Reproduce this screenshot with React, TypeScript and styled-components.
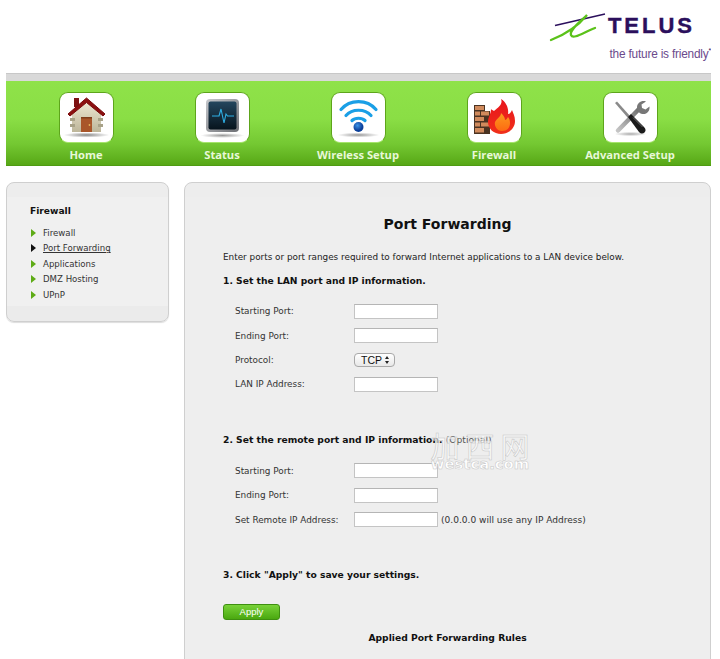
import * as React from 'react';
import styled, { createGlobalStyle } from 'styled-components';

const GlobalStyle = createGlobalStyle`
  html, body {
    margin: 0;
    padding: 0;
    background: #ffffff;
    font-family: "DejaVu Sans", Verdana, sans-serif;
  }
`;

const Page = styled.div`
  width: 705px;
  height: 659px;
  margin-left: 6px;
  overflow: hidden;
`;

const Header = styled.div`
  height: 73px;
  display: flex;
  flex-direction: column;
  align-items: flex-end;
`;

const LogoRow = styled.div`
  display: flex;
  align-items: flex-start;
  margin-top: 10px;
  margin-right: 16px;
`;

const LogoWord = styled.span`
  font-family: "Liberation Sans", Arial, sans-serif;
  font-weight: bold;
  font-size: 22px;
  line-height: 24px;
  letter-spacing: 3px;
  color: #2b0f5c;
  -webkit-text-stroke: 0.4px #2b0f5c;
  margin-top: 4px;
`;

const Tagline = styled.div`
  font-family: "Liberation Sans", Arial, sans-serif;
  font-size: 11.85px;
  line-height: 14px;
  letter-spacing: -0.2px;
  color: #6b4a8c;
  margin-top: 3px;
  sup {
    font-size: 7px;
    line-height: 0;
    color: #2b0f5c;
  }
`;

const TopStripe = styled.div`
  height: 7px;
  background: #d9d9d9;
  border-top: 1px solid #c8c8c8;
`;

const NavBar = styled.nav`
  height: 85px;
  padding-left: 12px;
  display: flex;
  background: linear-gradient(#8fe249 0%, #8ade45 45%, #74c832 75%, #57a716 100%);
  border-bottom: 1px solid #4f9b12;
  box-sizing: border-box;
`;

const NavItem = styled.a`
  width: 136px;
  display: flex;
  flex-direction: column;
  align-items: center;
  padding-top: 11px;
`;

const Tile = styled.div`
  width: 55px;
  height: 51px;
  box-sizing: border-box;
  background: #ffffff;
  border: 1px solid #5da51b;
  border-bottom-color: #a6e46c;
  border-radius: 9px;
  display: flex;
  align-items: center;
  justify-content: center;
`;

const NavLabel = styled.span`
  font-family: "Open Sans", "DejaVu Sans", sans-serif;
  font-size: 11.2px;
  line-height: 14px;
  font-weight: 700;
  color: #e8f8d8;
  margin-top: 5px;
  white-space: nowrap;
`;

const Columns = styled.div`
  display: flex;
  align-items: flex-start;
  gap: 15px;
  margin-top: 16px;
`;

const Panel = styled.div`
  box-sizing: border-box;
  background: #eeeeee;
  border: 1px solid #cfcfcf;
  border-radius: 8px;
`;

const Sidebar = styled(Panel)`
  width: 163px;
  height: 140px;
  flex: none;
  padding: 22px 0 0 23px;
  background: linear-gradient(#ededed 0, #ededed 14px, #f0f0f0 14px, #f0f0f0 123px, #ebebeb 123px);
  box-shadow: 0 1px 1px #dddddd;
`;

const SideTitle = styled.div`
  font-size: 9.1px;
  line-height: 12px;
  font-weight: bold;
  color: #111111;
  margin-bottom: 8px;
`;

const SideLink = styled.div<{ $active?: boolean }>`
  display: flex;
  align-items: center;
  height: 15.5px;
  font-size: 8.6px;
  color: #333333;
  text-decoration: ${p => (p.$active ? 'underline' : 'none')};
`;

const Arrow = styled.span<{ $active?: boolean }>`
  width: 0;
  height: 0;
  margin-left: 1px;
  margin-right: 7px;
  border-left: 5px solid ${p => (p.$active ? '#111111' : '#5eab16')};
  border-top: 4px solid transparent;
  border-bottom: 4px solid transparent;
`;

const Main = styled(Panel)`
  position: relative;
  width: 527px;
  height: 500px;
  flex: none;
  padding: 31px 0 0 38px;
  background: linear-gradient(#ededed 0, #ededed 14px, #eeeeee 14px);
`;

const PageTitle = styled.h1`
  margin: 0 38px 16px 0;
  font-size: 14px;
  line-height: 20px;
  font-weight: bold;
  color: #111111;
  text-align: center;
`;

const Intro = styled.p`
  margin: 0 0 10px;
  font-size: 8.86px;
  line-height: 14px;
  color: #222222;
  white-space: nowrap;
`;

const StepTitle = styled.h2<{ $gap?: number; $after?: number }>`
  margin: ${p => p.$gap ?? 0}px 0 ${p => p.$after ?? 10}px;
  font-size: 9.2px;
  line-height: 14px;
  font-weight: bold;
  color: #111111;
  white-space: nowrap;
`;

const Optional = styled.span`
  font-weight: normal;
  font-size: 9.2px;
  color: #555555;
`;

const FieldRow = styled.div`
  display: flex;
  align-items: center;
  height: 24.4px;
  padding-left: 12px;
`;

const FieldLabel = styled.label`
  width: 119px;
  flex: none;
  font-size: 8.9px;
  color: #333333;
`;

const TextInput = styled.div`
  width: 84px;
  height: 15px;
  box-sizing: border-box;
  background: #ffffff;
  border: 1px solid #c4c4c4;
  border-top-color: #b5b5b5;
`;

const SelectBox = styled.div`
  width: 41px;
  height: 14px;
  box-sizing: border-box;
  padding: 0 5px 0 6px;
  display: flex;
  align-items: center;
  justify-content: space-between;
  background: linear-gradient(#ffffff, #e8e8e8);
  border: 1px solid #a8a8a8;
  border-radius: 4px;
  font-family: "Liberation Sans", Arial, sans-serif;
  font-size: 10.5px;
  color: #111111;
`;

const Hint = styled.span`
  margin-left: 3px;
  font-size: 9.05px;
  color: #333333;
`;

const ApplyButton = styled.div`
  width: 57px;
  height: 16px;
  box-sizing: border-box;
  margin-top: 22px;
  background: linear-gradient(#78d238, #4aa810);
  border: 1px solid #3e8f10;
  border-radius: 3px;
  color: #ffffff;
  font-family: "Liberation Sans", Arial, sans-serif;
  font-size: 9.5px;
  line-height: 14px;
  text-align: center;
`;

const RulesTitle = styled.h3`
  margin: 11px 38px 0 0;
  font-size: 9.2px;
  line-height: 14px;
  font-weight: bold;
  color: #111111;
  text-align: center;
`;

const Watermark = styled.div`
  position: absolute;
  left: 243px;
  top: 250px;
  width: 104px;
  color: rgba(255, 255, 255, 0.65);
  -webkit-text-stroke: 0.5px #c4c4c4;
  text-align: center;
  font-family: "Noto Sans CJK SC", sans-serif;
  pointer-events: none;
`;

const WatermarkCn = styled.div`
  font-size: 29px;
  line-height: 25px;
  letter-spacing: 6px;
  margin-right: -6px;
  white-space: nowrap;
`;

const WatermarkEn = styled.div`
  font-family: "DejaVu Sans", sans-serif;
  font-size: 14.8px;
  line-height: 12px;
  font-weight: bold;
  color: #ffffff;
`;

const HomeIcon = () => (
  <svg width="53" height="49" viewBox="0 0 53 49">
    <defs>
      <linearGradient id="wall" x1="0" y1="0" x2="0" y2="1">
        <stop offset="0" stopColor="#efe9d4" />
        <stop offset="1" stopColor="#bdb69a" />
      </linearGradient>
      <radialGradient id="shadow">
        <stop offset="0" stopColor="#888888" />
        <stop offset="1" stopColor="#ffffff" />
      </radialGradient>
    </defs>
    <ellipse cx="26.5" cy="42" rx="23" ry="2.6" fill="url(#shadow)" />
    <path d="M14 5h5v9h-5z" fill="#7d1212" />
    <path d="M12 20 26.500 8 41 20v19H12z" fill="url(#wall)" />
    <path d="M8 21 26.500 5 45 21l-2 2L26.500 9.500 10 23z" fill="#8c1010" stroke="#7a0c0c" strokeWidth="1" strokeLinejoin="round" />
    <path d="M10 25h5v3h-5zM10 31h5v3h-5zM38 25h5v3h-5zM38 31h5v3h-5z" fill="#a8a288" />
    <path d="M21 24h11v15H21z" fill="#a9562a" />
    <path d="M21 24h11v1.500H21z" fill="#7e3d1b" />
    <circle cx="29.500" cy="32" r="0.9" fill="#e5b45e" />
  </svg>
);

const StatusIcon = () => (
  <svg width="53" height="49" viewBox="0 0 53 49">
    <defs>
      <linearGradient id="screen" x1="0" y1="0" x2="0" y2="1">
        <stop offset="0" stopColor="#24465e" />
        <stop offset="1" stopColor="#07141d" />
      </linearGradient>
      <linearGradient id="bezel" x1="0" y1="0" x2="1" y2="1">
        <stop offset="0" stopColor="#c6c8cc" />
        <stop offset="1" stopColor="#6d6f74" />
      </linearGradient>
      <radialGradient id="shadow2">
        <stop offset="0" stopColor="#999999" />
        <stop offset="1" stopColor="#ffffff" />
      </radialGradient>
    </defs>
    <ellipse cx="26.500" cy="42.500" rx="22" ry="2.400" fill="url(#shadow2)" />
    <rect x="10" y="6" width="33" height="33" rx="4" fill="url(#bezel)" />
    <rect x="12.500" y="8.500" width="28" height="28" rx="2" fill="url(#screen)" />
    <path d="M16 23h7l2-7 3 14 2-9 1.500 2H38" fill="none" stroke="#2fb0e6" strokeWidth="1.100" />
  </svg>
);

const WifiIcon = () => (
  <svg width="53" height="49" viewBox="0 0 53 49">
    <defs>
      <radialGradient id="dot" cx="0.400" cy="0.350">
        <stop offset="0" stopColor="#3c94e8" />
        <stop offset="1" stopColor="#0b3f9a" />
      </radialGradient>
      <radialGradient id="shadow3">
        <stop offset="0" stopColor="#999999" />
        <stop offset="1" stopColor="#ffffff" />
      </radialGradient>
    </defs>
    <ellipse cx="26.500" cy="42" rx="21" ry="2.400" fill="url(#shadow3)" />
    <g fill="none" stroke="#1a9fe6" strokeWidth="3.200" strokeLinecap="round">
      <path d="M9 16.500C18 6 35 6 44 16.500" />
      <path d="M14 22.500C20 15.500 33 15.500 39 22.500" />
      <path d="M20 27.500C23 24.500 30 24.500 33 27.500" />
    </g>
    <circle cx="26.500" cy="34" r="5" fill="url(#dot)" />
  </svg>
);

const FirewallIcon = () => (
  <svg width="53" height="49" viewBox="0 0 53 49">
    <defs>
      <linearGradient id="flame" x1="0" y1="0" x2="0" y2="1">
        <stop offset="0" stopColor="#e8141c" />
        <stop offset="1" stopColor="#f0301a" />
      </linearGradient>
      <linearGradient id="core" x1="0" y1="0" x2="0" y2="1">
        <stop offset="0" stopColor="#fb9a1e" />
        <stop offset="1" stopColor="#fd6a12" />
      </linearGradient>
    </defs>
    <path d="M6 12h11v6h5v23H6z" fill="#4a3322" />
    <path d="M7 13h9v4H7zM7 18.500h5v4H7zM13 18.500h8v4h-8zM7 24h9v4H7zM7 29.500h5v4H7zM13 29.500h8v4h-8zM7 35h9v4.500H7z" fill="#d08a5c" />
    <path d="M33 6c2 5-2 8-7 12-2-1-3-2-3-2 0 5-3 8-3 13 0 7 6 12 13 12s14-5 14-13c0-5-2-8-3-11-1 2-2 4-4 4 1-6-2-12-7-15z" fill="url(#flame)" />
    <path d="M33 20c0 4-4 5-6 9-1 4 2 9 7 9s8-3 8-8c0-3-1-5-2-6-1 2-2 3-3 3 0-3-2-5-4-7z" fill="url(#core)" />
  </svg>
);

const ToolsIcon = () => (
  <svg width="53" height="49" viewBox="0 0 53 49">
    <defs>
      <radialGradient id="shadow5">
        <stop offset="0" stopColor="#aaaaaa" />
        <stop offset="1" stopColor="#ffffff" />
      </radialGradient>
      <linearGradient id="steel" x1="0" y1="1" x2="1" y2="0">
        <stop offset="0" stopColor="#c4c4c4" />
        <stop offset="1" stopColor="#6e6e6e" />
      </linearGradient>
    </defs>
    <ellipse cx="26.500" cy="41" rx="16" ry="2.200" fill="url(#shadow5)" />
    <path d="M14 37.500 35 16" stroke="url(#steel)" strokeWidth="4.500" strokeLinecap="round" />
    <path d="M42 8.500c-4-1.500-9 1-9 6 0 3 2 6 5.500 6.500 4.500.5 7.500-3 7-7.500l-4 3-3.500-1.500-.5-3.500z" fill="#777777" />
    <path d="M11 10l2-1.500L26 23l-2 2z" fill="#8a8a8a" />
    <path d="M24 24 27 21l13 13c2 2 2 4 .5 5.500S37 41 35 39z" fill="#1b1b1b" />
    <path d="M29 24.500l9.500 9.500" stroke="#6a6a6a" strokeWidth="1" />
  </svg>
);

const SelectArrows = () => (
  <svg width="4" height="8" viewBox="0 0 4 8">
    <path d="M2 0 4 3H0zM2 8 0 5h4z" fill="#222222" />
  </svg>
);

const navItems = [
  { label: 'Home', icon: <HomeIcon /> },
  { label: 'Status', icon: <StatusIcon /> },
  { label: 'Wireless Setup', icon: <WifiIcon /> },
  { label: 'Firewall', icon: <FirewallIcon /> },
  { label: 'Advanced Setup', icon: <ToolsIcon /> },
];

const sideLinks = ['Firewall', 'Port Forwarding', 'Applications', 'DMZ Hosting', 'UPnP'];

export default function App(): React.ReactElement {
  return (
    <Page>
      <GlobalStyle />
      <Header>
        <LogoRow>
          <svg width="60" height="34" viewBox="0 0 60 34">
            <path d="M7 15.500 57 4" stroke="#2b0f5c" strokeWidth="1.500" fill="none" />
            <path d="M3 30C16 25 30 16 39 5 33 11 21 20 23 25 25 30 36 22 47 18" stroke="#5bc21a" strokeWidth="2.300" fill="none" strokeLinecap="round" />
          </svg>
          <LogoWord>TELUS</LogoWord>
        </LogoRow>
        <Tagline>
          the future is friendly<sup>*</sup>
        </Tagline>
      </Header>
      <TopStripe />
      <NavBar>
        {navItems.map(item => (
          <NavItem key={item.label}>
            <Tile>{item.icon}</Tile>
            <NavLabel>{item.label}</NavLabel>
          </NavItem>
        ))}
      </NavBar>
      <Columns>
        <Sidebar>
          <SideTitle>Firewall</SideTitle>
          {sideLinks.map(link => (
            <SideLink key={link} $active={link === 'Port Forwarding'}>
              <Arrow $active={link === 'Port Forwarding'} />
              {link}
            </SideLink>
          ))}
        </Sidebar>
        <Main>
          <PageTitle>Port Forwarding</PageTitle>
          <Intro>Enter ports or port ranges required to forward Internet applications to a LAN device below.</Intro>
          <StepTitle $after={11}>1. Set the LAN port and IP information.</StepTitle>
          <FieldRow>
            <FieldLabel>Starting Port:</FieldLabel>
            <TextInput />
          </FieldRow>
          <FieldRow>
            <FieldLabel>Ending Port:</FieldLabel>
            <TextInput />
          </FieldRow>
          <FieldRow>
            <FieldLabel>Protocol:</FieldLabel>
            <SelectBox>
              TCP
              <SelectArrows />
            </SelectBox>
          </FieldRow>
          <FieldRow>
            <FieldLabel>LAN IP Address:</FieldLabel>
            <TextInput />
          </FieldRow>
          <StepTitle $gap={36} $after={12}>
            2. Set the remote port and IP information. <Optional>(Optional)</Optional>
          </StepTitle>
          <FieldRow>
            <FieldLabel>Starting Port:</FieldLabel>
            <TextInput />
          </FieldRow>
          <FieldRow>
            <FieldLabel>Ending Port:</FieldLabel>
            <TextInput />
          </FieldRow>
          <FieldRow>
            <FieldLabel>Set Remote IP Address:</FieldLabel>
            <TextInput />
            <Hint>(0.0.0.0 will use any IP Address)</Hint>
          </FieldRow>
          <StepTitle $gap={36}>3. Click "Apply" to save your settings.</StepTitle>
          <ApplyButton>Apply</ApplyButton>
          <RulesTitle>Applied Port Forwarding Rules</RulesTitle>
          <Watermark>
            <WatermarkCn>加西网</WatermarkCn>
            <WatermarkEn>westca.com</WatermarkEn>
          </Watermark>
        </Main>
      </Columns>
    </Page>
  );
}
